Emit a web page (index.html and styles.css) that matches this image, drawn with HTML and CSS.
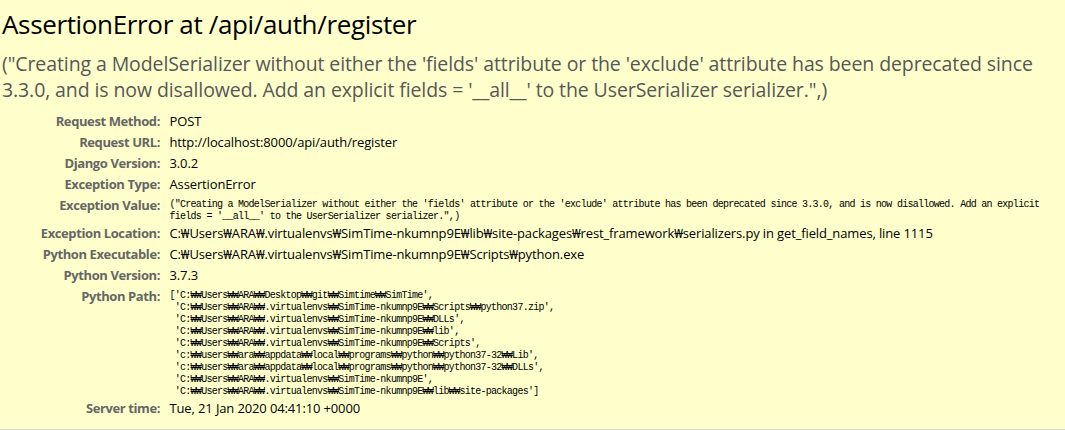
FILE: index.html
```html
<!DOCTYPE html>
<html lang="en">
<head>
<meta charset="utf-8">
<title>AssertionError at /api/auth/register</title>
<link rel="stylesheet" href="styles.css">
</head>
<body>
<div class="summary">
  <h1 class="title">AssertionError at /api/auth/register</h1>
  <pre class="exception-value">("Creating a ModelSerializer without either the 'fields' attribute or the 'exclude' attribute has been deprecated since
3.3.0, and is now disallowed. Add an explicit fields = '__all__' to the UserSerializer serializer.",)</pre>
  <table class="meta">
    <tbody>
      <tr><th>Request Method:</th><td>POST</td></tr>
      <tr><th>Request URL:</th><td>http://localhost:8000/api/auth/register</td></tr>
      <tr><th>Django Version:</th><td>3.0.2</td></tr>
      <tr><th>Exception Type:</th><td>AssertionError</td></tr>
      <tr><th>Exception Value:</th><td class="code"><pre>("Creating a ModelSerializer without either the 'fields' attribute or the 'exclude' attribute has been deprecated since 3.3.0, and is now disallowed. Add an explicit
fields = '__all__' to the UserSerializer serializer.",)</pre></td></tr>
      <tr><th>Exception Location:</th><td>C:₩Users₩ARA₩.virtualenvs₩SimTime-nkumnp9E₩lib₩site-packages₩rest_framework₩serializers.py in get_field_names, line 1115</td></tr>
      <tr><th>Python Executable:</th><td>C:₩Users₩ARA₩.virtualenvs₩SimTime-nkumnp9E₩Scripts₩python.exe</td></tr>
      <tr><th>Python Version:</th><td>3.7.3</td></tr>
      <tr><th>Python Path:</th><td class="code"><pre>['C:₩₩Users₩₩ARA₩₩Desktop₩₩git₩₩Simtime₩₩SimTime',
 'C:₩₩Users₩₩ARA₩₩.virtualenvs₩₩SimTime-nkumnp9E₩₩Scripts₩₩python37.zip',
 'C:₩₩Users₩₩ARA₩₩.virtualenvs₩₩SimTime-nkumnp9E₩₩DLLs',
 'C:₩₩Users₩₩ARA₩₩.virtualenvs₩₩SimTime-nkumnp9E₩₩lib',
 'C:₩₩Users₩₩ARA₩₩.virtualenvs₩₩SimTime-nkumnp9E₩₩Scripts',
 'c:₩₩users₩₩ara₩₩appdata₩₩local₩₩programs₩₩python₩₩python37-32₩₩Lib',
 'c:₩₩users₩₩ara₩₩appdata₩₩local₩₩programs₩₩python₩₩python37-32₩₩DLLs',
 'C:₩₩Users₩₩ARA₩₩.virtualenvs₩₩SimTime-nkumnp9E',
 'C:₩₩Users₩₩ARA₩₩.virtualenvs₩₩SimTime-nkumnp9E₩₩lib₩₩site-packages']</pre></td></tr>
      <tr><th>Server time:</th><td>Tue, 21 Jan 2020 04:41:10 +0000</td></tr>
    </tbody>
  </table>
</div>
</body>
</html>
```

FILE: styles.css
```css
* {
  margin: 0;
  padding: 0;
}

html,
body {
  background: #fff;
}

body {
  font-family: "Open Sans", "Noto Sans", "Noto Sans CJK KR", sans-serif;
  font-size: 13px;
  color: #000;
}

.summary {
  background: #ffc;
  border-bottom: 1px solid #ddd;
  padding: 10px 20px 10px 2px;
}

.title {
  font-size: 26px;
  font-weight: normal;
  line-height: 29px;
  letter-spacing: -0.35px;
}

.exception-value {
  font-family: inherit;
  font-size: 19.5px;
  line-height: 26px;
  color: #575757;
  margin: 12px 0 8px 0;
  white-space: pre;
  letter-spacing: -0.1px;
}

.meta {
  border: none;
  border-collapse: collapse;
  width: 100%;
  background: transparent;
}

.meta th,
.meta td {
  vertical-align: top;
  line-height: 17px;
}

.meta th {
  width: 156px;
  text-align: right;
  color: #666;
  font-weight: bold;
  letter-spacing: -0.4px;
  padding: 2px 6.5px 2px 2px;
}

.meta td {
  padding: 2px 3px;
  letter-spacing: -0.13px;
}

.meta td.code {
  padding: 4px 3px 0 3px;
}

.meta pre {
  font-family: "Liberation Mono", "DejaVu Sans Mono", monospace;
  font-size: 10px;
  letter-spacing: -0.73px;
  line-height: 12px;
  white-space: pre;
}
```
